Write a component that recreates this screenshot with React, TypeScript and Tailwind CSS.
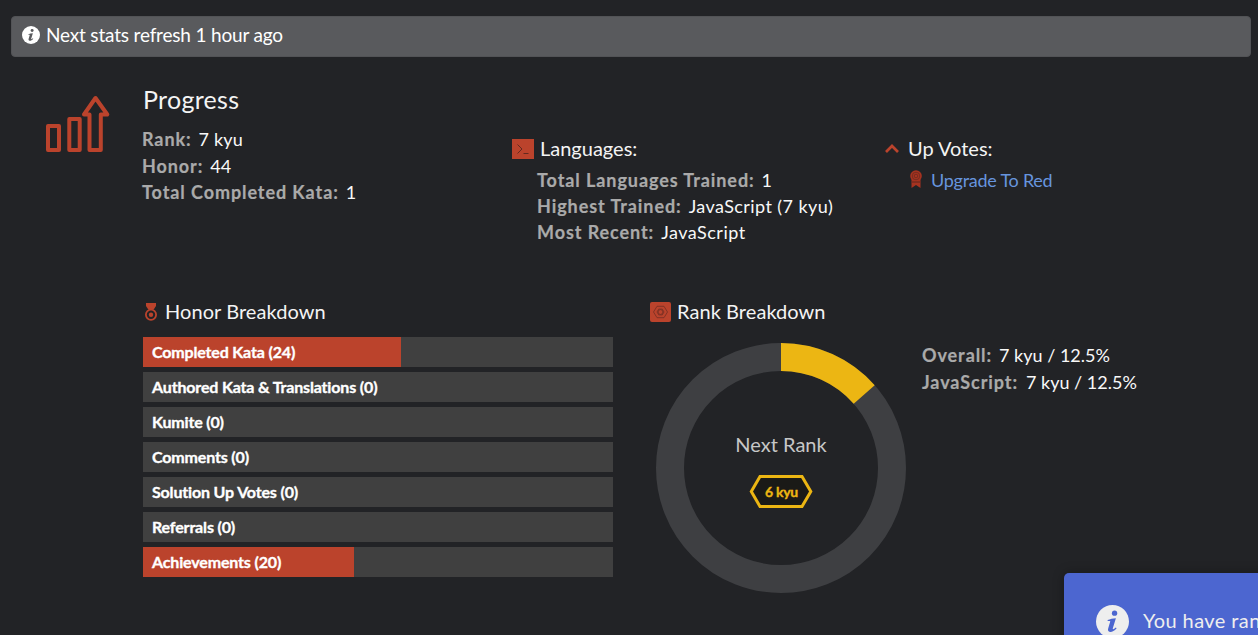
import React from "react";

function Row({
  label,
  value,
  className = "",
  valueClass = "",
}: {
  label: string;
  value: string;
  className?: string;
  valueClass?: string;
}) {
  return (
    <div className={`flex whitespace-pre leading-[26px] ${className}`}>
      <span className="mr-[7px] text-[18px] font-bold tracking-[0.92px] text-[#aaaaaa] [-webkit-text-stroke:0.2px_#aaaaaa]">{label}</span>
      <span className={`text-[18px] text-[#f8f8f8] ${valueClass}`}>{value}</span>
    </div>
  );
}

const bars = [
  { text: "Completed Kata (24)", width: 258 },
  { text: "Authored Kata & Translations (0)", width: 0 },
  { text: "Kumite (0)", width: 0 },
  { text: "Comments (0)", width: 0 },
  { text: "Solution Up Votes (0)", width: 0 },
  { text: "Referrals (0)", width: 0 },
  { text: "Achievements (20)", width: 211 },
];

function InfoIcon({ className, hole }: { className: string; hole: string }) {
  return (
    <svg viewBox="0 0 32 32" className={className}>
      <circle cx="16" cy="16" r="16" fill="currentColor" />
      <circle cx="18" cy="7.9" r="2.6" fill={hole} />
      <path d="M11.3 14.6C13.6 13.6 16.4 12.9 19.3 12.8L16.3 22.6C16 23.8 17 23.9 19.2 21.8L20 22.5C17.8 25.1 15.7 26.2 13.7 26.1C11.7 26 11.3 24.6 11.8 22.8L13.8 16.1C13.9 15.4 13 15.3 11.3 15.6Z" fill={hole} />
    </svg>
  );
}

export default function App() {
  return (
    <div className="relative h-[635px] w-[1258px] overflow-hidden bg-[#222326] font-['Lato',sans-serif] text-[#f4f4f4]">
      <div className="flex h-full flex-col pt-4">
        <div className="ml-[11px] flex h-[41px] w-[1240px] shrink-0 items-center rounded border border-[#525356] bg-[#595a5d] pl-[10px]">
          <InfoIcon className="-mt-[3px] h-[18px] w-[18px] text-white" hole="#595a5d" />
          <span className="ml-[6px] pb-[2px] text-[19px] tracking-[-0.18px] text-white">Next stats refresh 1 hour ago</span>
        </div>

        <div className="flex h-[242px] shrink-0 pl-[45px] pt-[27px]">
          <svg viewBox="0 0 66 60" className="mt-[11px] h-[60px] w-[66px] shrink-0" fill="none" stroke="#bb432c" strokeWidth="4" strokeLinejoin="round">
            <path d="M3 31H14V55H3Z M24.3 24H34.7V55H24.3Z M44.5 55V19.5H39L50.5 3L62.3 19.5H55.8V55Z" />
          </svg>
          <div className="ml-[31px] w-[370px] shrink-0">
            <h2 className="mb-[12px] ml-px text-[25px] leading-[30px] tracking-[0.3px]">Progress</h2>
            <Row label="Rank:" value="7 kyu" valueClass="tracking-[0.2px]" />
            <Row label="Honor:" value="44" className="mt-px" />
            <Row label="Total Completed Kata:" value="1" />
          </div>
          <div className="w-[373px] shrink-0 pt-[51px]">
            <div className="flex h-[26px] items-center">
              <svg viewBox="0 0 22 20" className="mt-px h-5 w-[22px]" fill="none">
                <path d="M0 0H22V20H0Z" fill="#bb432c" />
                <path d="M5.5 5.5L10 10L5.5 14.5M11.5 14.5H16.5" stroke="#63291f" strokeWidth="1" />
              </svg>
              <span className="ml-[6px] text-[20px]">Languages:</span>
            </div>
            <div className="ml-[25px] mt-[6px]">
              <Row label="Total Languages Trained:" value="1" />
              <Row label="Highest Trained:" value="JavaScript (7 kyu)" valueClass="tracking-[0.42px]" />
              <Row label="Most Recent:" value="JavaScript" valueClass="tracking-[0.5px]" />
            </div>
          </div>
          <div className="pt-[51px]">
            <div className="flex h-[26px] items-center">
              <svg viewBox="0 0 14 9" className="mt-px h-[9px] w-[14px]" fill="none" stroke="#bb432c" strokeWidth="2.7">
                <path d="M1 8L7 2L13 8" />
              </svg>
              <span className="ml-[9px] text-[20px]">Up Votes:</span>
            </div>
            <div className="ml-[25px] mt-[6px] flex h-[26px] items-center">
              <svg viewBox="0 0 12 18" className="-mt-[3px] h-[18px] w-3">
                <path d="M1.5 9H10.5V18L6 15L1.5 18Z" fill="#a73320" />
                <circle cx="6" cy="6" r="5.8" fill="#a73320" />
                <circle cx="6" cy="6" r="3.8" fill="none" stroke="#4b241f" strokeWidth=".5" />
                <circle cx="6" cy="6" r="1.8" fill="none" stroke="#4b241f" strokeWidth=".5" />
                <path d="M2 12H10" stroke="#4b241f" strokeWidth=".8" />
              </svg>
              <span className="ml-[9px] text-[18px] tracking-[-0.25px] text-[#6795de]">Upgrade To Red</span>
            </div>
          </div>
        </div>

        <div className="flex pl-[143px]">
          <div className="w-[507px] shrink-0">
            <div className="flex h-[24px] items-center">
              <svg viewBox="0 0 16 18" className="mt-[2px] h-[18px] w-4" fill="none">
                <path d="M3 0H13V3L10.7 6.5H5.3L3 3Z" fill="#bb432c" />
                <circle cx="8" cy="11.8" r="5.1" stroke="#bb432c" strokeWidth="1.8" />
                <circle cx="8" cy="11.8" r="2.2" fill="#bb432c" />
              </svg>
              <span className="ml-[6px] text-[20px] tracking-[0.06px]">Honor Breakdown</span>
            </div>
            <div className="mt-[14px] flex w-[470px] flex-col gap-[5px]">
              {bars.map((b) => (
                <div key={b.text} className="grid h-[30px] grid-rows-[30px] bg-[#404040]">
                  <div className="col-start-1 row-start-1 bg-[#bb432c]" style={{ width: b.width }} />
                  <span className="col-start-1 row-start-1 pl-[9px] text-[16px] font-bold leading-[30px] tracking-[-0.16px] text-white [-webkit-text-stroke:0.35px_white]">{b.text}</span>
                </div>
              ))}
            </div>
          </div>
          <div className="w-[272px] shrink-0">
            <div className="flex h-[24px] items-center">
              <svg viewBox="0 0 21 20" className="mt-[2px] h-5 w-[21px]" fill="none" stroke="#7b3024" strokeWidth=".9">
                <rect width="21" height="20" rx="2" fill="#bb432c" stroke="none" />
                <path d="M3.5 10L7 4.3H14L17.5 10L14 15.7H7Z M7 10L8.7 7.1H12.3L14 10L12.3 12.9H8.7Z" />
                <circle cx="10.5" cy="10" r="2.4" />
              </svg>
              <span className="ml-[6px] text-[20px] tracking-[0.06px]">Rank Breakdown</span>
            </div>
            <div className="ml-[6px] mt-[20px] grid h-[250px] w-[250px]">
              <svg viewBox="0 0 250 250" className="col-start-1 row-start-1">
                <circle cx="125" cy="125" r="111" fill="none" stroke="#3e3f42" strokeWidth="28" />
                <path d="M125 0A125 125 0 0 1 218.7 42.2L197.7 60.8A97 97 0 0 0 125 28Z" fill="#ecb613" />
              </svg>
              <div className="col-start-1 row-start-1 flex flex-col items-center pt-[88px]">
                <span className="text-[20px] leading-[26px] text-[#c7c7c7]">Next Rank</span>
                <div className="mt-[17px] grid h-[34px] w-[64px] place-items-center">
                  <svg viewBox="0 0 64 34" className="col-start-1 row-start-1 h-[34px] w-[64px]">
                    <path d="M2.3 17.5L11 2.5H53L61.8 17.5L53 32.5H11Z" fill="#1a1a17" stroke="#ecb613" strokeWidth="3" />
                  </svg>
                  <span className="col-start-1 row-start-1 pl-px text-[14px] font-bold tracking-[-0.3px] text-[#ecb613] [-webkit-text-stroke:0.35px_#ecb613]">6 kyu</span>
                </div>
              </div>
            </div>
          </div>
          <div className="pt-[43px]">
            <Row label="Overall:" value="7 kyu / 12.5%" />
            <Row label="JavaScript:" value="7 kyu / 12.5%" className="mt-px" valueClass="ml-px" />
          </div>
        </div>
      </div>

      <div className="absolute left-[1064px] top-[573px] flex h-[96px] w-[420px] items-center rounded-[5px] bg-[#4c66d0] pl-[32px] text-[#eeeeee] shadow-[0_0_12px_rgba(0,0,0,0.3)]">
        <InfoIcon className="h-[33px] w-[33px] shrink-0" hole="#4c66d0" />
        <span className="ml-[14px] whitespace-nowrap pb-[2px] text-[20px] tracking-[0.42px]">You have ranked up</span>
      </div>
    </div>
  );
}
